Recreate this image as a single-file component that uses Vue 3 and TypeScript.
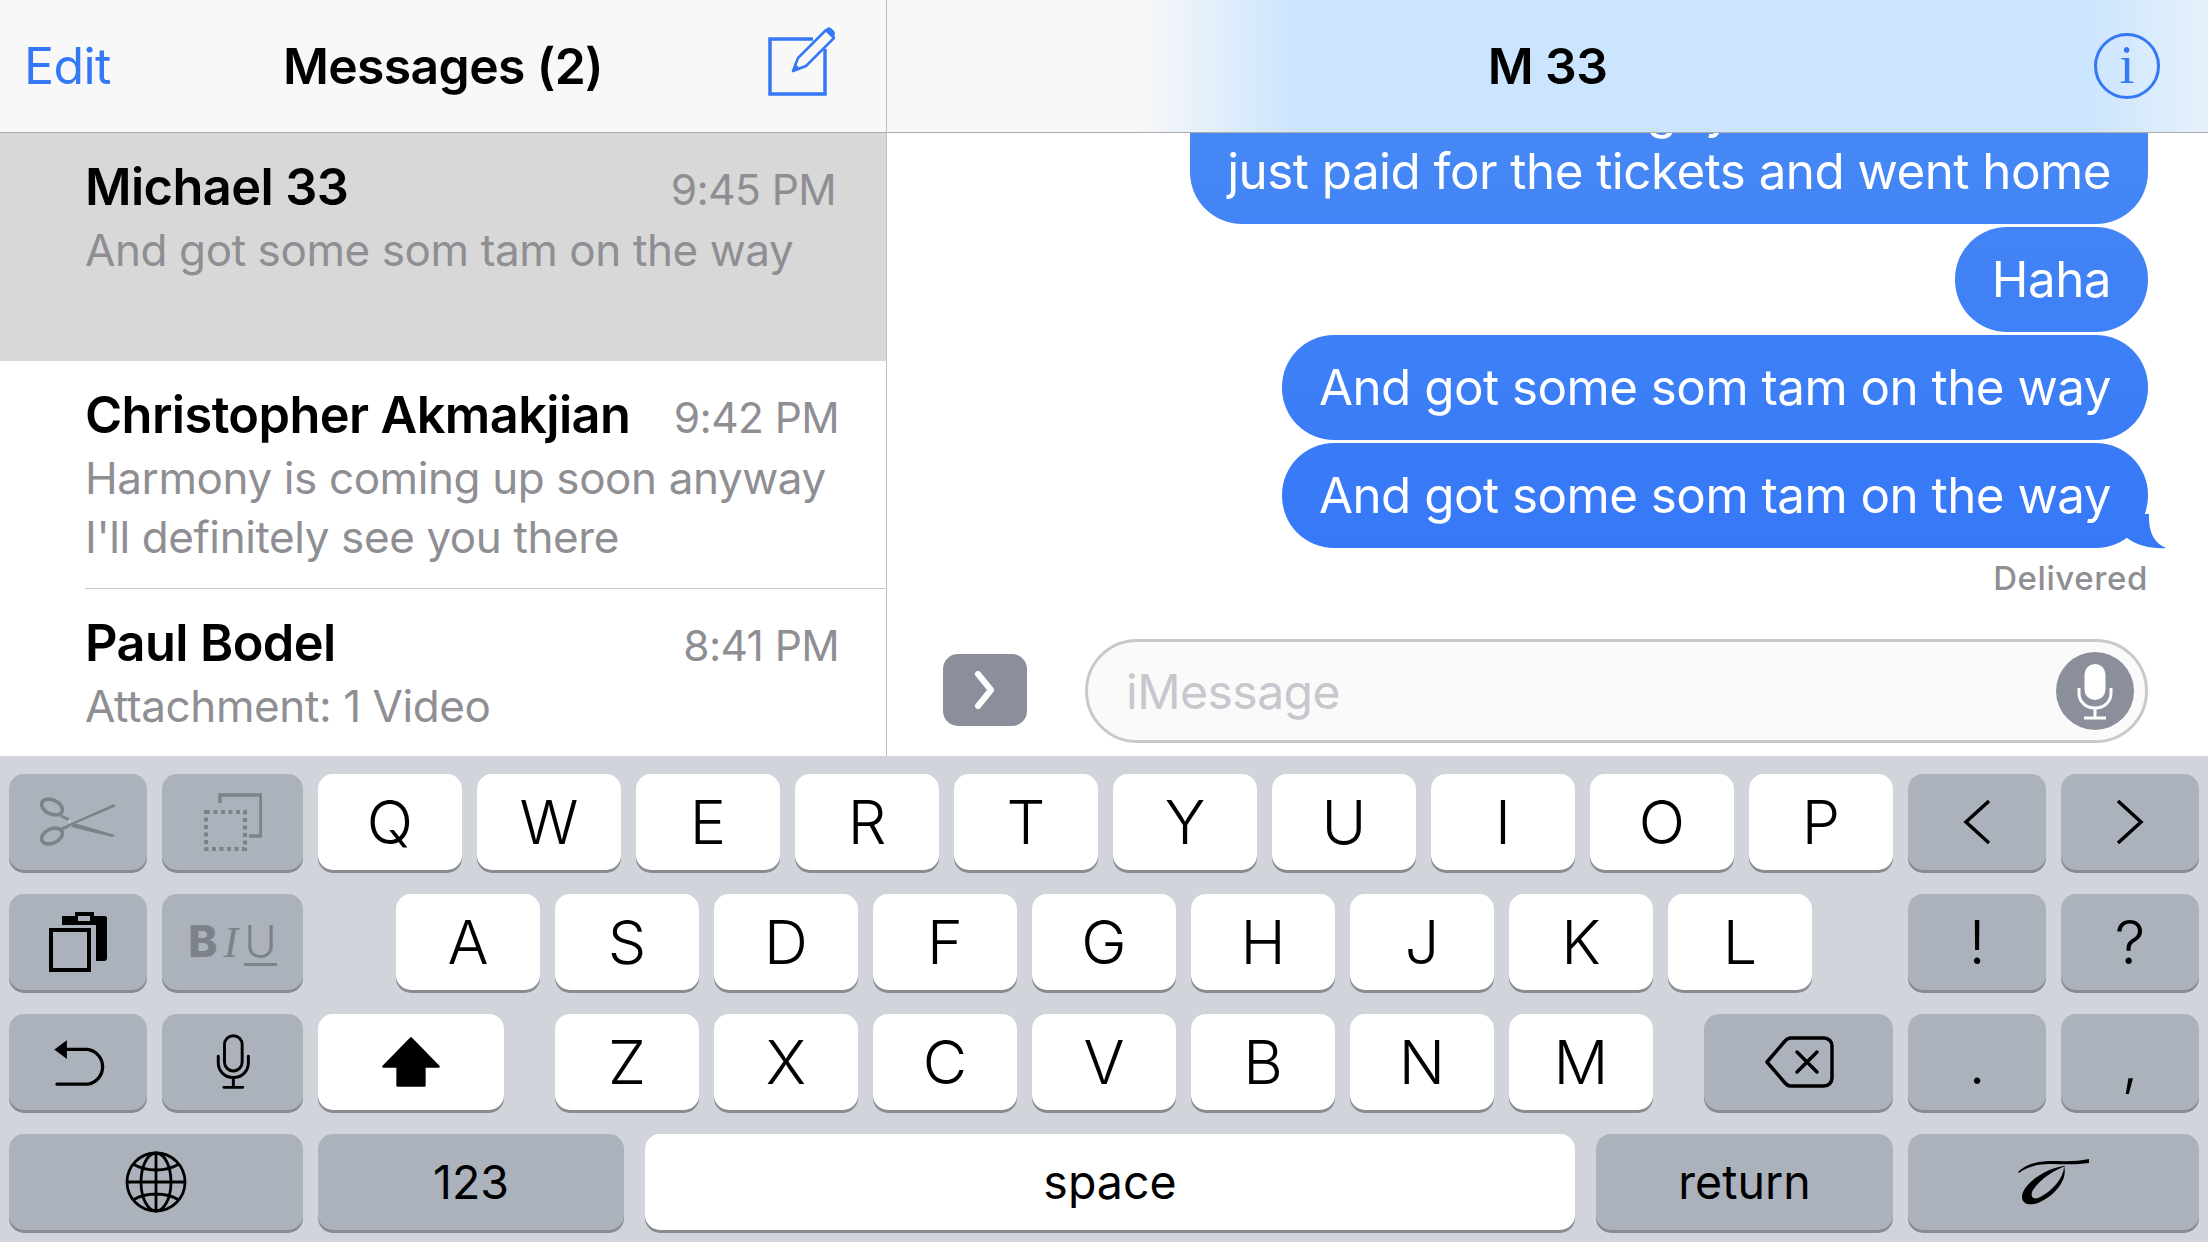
<template>
  <div class="screen">
    <div class="top">
      <!-- conversation list -->
      <aside class="list">
        <header class="nav nav--list">
          <span class="nav__edit">Edit</span>
          <span class="nav__title">Messages (2)</span>
          <svg class="nav__compose" width="72" height="72" viewBox="0 0 72 72" fill="none">
            <path d="M47 14H4v55h55V24" stroke="#3478f6" stroke-width="3.5" />
            <path d="M27 46l5-13 28-28 8 8-28 28z" stroke="#3478f6" stroke-width="2.5" stroke-linejoin="round" fill="#f8f8f8" />
            <path d="M27 46l2.500-7 5 5z" fill="#3478f6" />
            <path d="M60 4l2-1.500c2-1 6 3 7 5.500l-1 5z" fill="#3478f6" />
          </svg>
        </header>
        <div
          v-for="c in conversations"
          :key="c.name"
          class="conv"
          :class="{ 'conv--active': c.active }"
          :style="{ height: c.height + 'px' }"
        >
          <div class="conv__head">
            <span class="conv__name">{{ c.name }}</span>
            <span class="conv__time">{{ c.time }}</span>
          </div>
          <div v-for="line in c.preview" :key="line" class="conv__preview">{{ line }}</div>
        </div>
      </aside>

      <!-- open thread -->
      <section class="chat">
        <header class="nav nav--chat">
          <span class="nav__title">M 33</span>
          <span class="nav__info">i</span>
        </header>
        <div class="thread">
          <div class="bubble">
            <div>So we did see the guy at all and</div>
            <div>just paid for the tickets and went home</div>
          </div>
          <div class="bubble">Haha</div>
          <div class="bubble">And got some som tam on the way</div>
          <div class="bubble bubble--tail">
            And got some som tam on the way
            <svg class="bubble__tail" width="46" height="35" viewBox="0 0 46 35">
              <path d="M0 0H29V4C29 18 34 29 46 34C33 35 16 32 6 23Z" fill="#3879f7" />
            </svg>
          </div>
          <div class="delivered">Delivered</div>
        </div>
        <div class="composer">
          <button class="composer__apps">
            <svg width="24" height="38" viewBox="0 0 24 38" fill="none">
              <path d="M5 3l13 16L5 35" stroke="#fff" stroke-width="6" stroke-linecap="round" stroke-linejoin="round" />
            </svg>
          </button>
          <div class="composer__field">
            <span class="composer__hint">iMessage</span>
            <span class="composer__mic">
              <svg width="36" height="56" viewBox="0 0 36 56" fill="none">
                <rect x="7.500" y="0" width="21" height="36" rx="10.500" fill="#fff" />
                <path d="M2 24v5c0 9 7 15 16 15s16-6 16-15v-5M18 44v9M7 54h22" stroke="#fff" stroke-width="3" />
              </svg>
            </span>
          </div>
        </div>
      </section>
    </div>

    <!-- keyboard -->
    <div class="keyboard">
      <div v-for="(row, r) in rows" :key="r" class="kb-row">
        <div
          v-for="k in row"
          :key="k.id"
          class="key"
          :class="[k.dark ? 'key--dark' : 'key--light', k.small ? 'key--small' : '']"
          :style="{ width: k.w + 'px', marginLeft: (k.skip ?? 0) + 'px' }"
        >
          <template v-if="k.text">{{ k.text }}</template>

          <svg v-else-if="k.id === 'cut'" width="76" height="50" viewBox="0 0 76 50" fill="none">
            <ellipse cx="12" cy="10" rx="11" ry="7" transform="rotate(25 12 10)" stroke="#7d8289" stroke-width="3.500" />
            <ellipse cx="12" cy="39" rx="11" ry="7" transform="rotate(-25 12 39)" stroke="#7d8289" stroke-width="3.500" />
            <path d="M20 31L74 7l1.500 2.500L33 27.500l-7 4.500-4 1zM34 26l41 12-3 2-41-10zM21 17l9 5-2 2-8-4z" fill="#7d8289" />
            <circle cx="29.500" cy="24" r="1.500" fill="#c9ccd2" />
          </svg>

          <svg v-else-if="k.id === 'copy'" width="58" height="58" viewBox="0 0 58 58" fill="none">
            <path d="M16 10V2h41v41H45" stroke="#7d8289" stroke-width="3.500" />
            <rect x="2" y="19" width="39" height="37" stroke="#7d8289" stroke-width="4" stroke-dasharray="4 3.500" />
          </svg>

          <svg v-else-if="k.id === 'paste'" width="58" height="62" viewBox="0 0 58 62" fill="none">
            <path d="M13 5h43a2 2 0 0 1 2 2v40a3 3 0 0 1-3 3h-8V14H13z" fill="#000" />
            <path d="M13 11V8a4 4 0 0 1 4-3h9V1h19v4" fill="#000" />
            <rect x="29" y="5" width="12" height="5" fill="#abb2bc" />
            <rect x="2" y="19" width="38" height="40" stroke="#000" stroke-width="4" />
          </svg>

          <span v-else-if="k.id === 'biu'" class="biu">
            <b class="biu__b">B</b><i class="biu__i">I</i><u class="biu__u">U</u>
          </span>

          <svg v-else-if="k.id === 'undo'" width="58" height="50" viewBox="144 855 175 150" fill="none">
            <path d="M160 892l38-28v57z" fill="#000" />
            <path d="M195 892h65a53 53 0 0 1 0 105h-92" stroke="#000" stroke-width="10" stroke-linecap="round" />
          </svg>

          <svg v-else-if="k.id === 'dictate'" width="36" height="58" viewBox="640 850 110 175" fill="none">
            <rect x="669" y="857" width="54" height="108" rx="27" stroke="#000" stroke-width="9" />
            <path d="M650 920v20c0 26 20 45 46 45s46-19 46-45v-20M696 985v30M667 1015h58" stroke="#000" stroke-width="9" stroke-linecap="round" />
          </svg>

          <svg v-else-if="k.id === 'shift'" width="58" height="50" viewBox="0 0 176 152" fill="none">
            <path d="M88 4L4 90h43v58h82V90h43z" fill="#000" stroke="#000" stroke-width="7" stroke-linejoin="round" />
          </svg>

          <svg v-else-if="k.id === 'back'" width="70" height="52" viewBox="0 0 70 52" fill="none">
            <path d="M3 26L21 5a9 9 0 0 1 5-3h34a8 8 0 0 1 8 8v32a8 8 0 0 1-8 8H26a9 9 0 0 1-5-3z" stroke="#000" stroke-width="3.500" stroke-linejoin="round" />
            <path d="M33 16l20 20M53 16L33 36" stroke="#000" stroke-width="3.500" stroke-linecap="round" />
          </svg>

          <svg v-else-if="k.id === 'left'" width="30" height="46" viewBox="0 0 30 46" fill="none">
            <path d="M27 2L4 23l23 21" stroke="#000" stroke-width="3.500" />
          </svg>

          <svg v-else-if="k.id === 'right'" width="30" height="46" viewBox="0 0 30 46" fill="none">
            <path d="M3 2l23 21L3 44" stroke="#000" stroke-width="3.500" />
          </svg>

          <svg v-else-if="k.id === 'globe'" width="62" height="62" viewBox="0 0 62 62" fill="none" stroke="#000" stroke-width="2.800">
            <circle cx="31" cy="31" r="29" />
            <ellipse cx="31" cy="31" rx="15" ry="29" />
            <path d="M31 2v58M2 31h58M8 13c13 8 33 8 46 0M8 49c13-8 33-8 46 0" />
          </svg>

          <svg v-else-if="k.id === 'scribble'" width="72" height="46" viewBox="0 0 72 46">
            <path d="M0 13C8 5 20 2 32 2C45 2 58 3 71 0L71 4C58 6 44 5 32 5C20 5 8 8 1 14z" fill="#000" />
            <path d="M48 7C32 7 4 24 4 38C4 47 16 47 24 42C38 35 50 20 46 7C46 20 32 34 20 39C14 41 12 36 15 31C22 20 38 10 48 7z" fill="#000" />
          </svg>
        </div>
      </div>
    </div>
  </div>
</template>

<script setup lang="ts">
interface Conversation {
  name: string;
  time: string;
  preview: string[];
  height: number;
  active?: boolean;
}

interface Key {
  id: string;
  w: number;
  text?: string;
  dark?: boolean;
  small?: boolean;
  skip?: number; // extra space before the key
}

const conversations: Conversation[] = [
  { name: 'Michael 33', time: '9:45 PM', preview: ['And got some som tam on the way'], height: 228, active: true },
  {
    name: 'Christopher Akmakjian',
    time: '9:42 PM',
    preview: ['Harmony is coming up soon anyway', "I'll definitely see you there"],
    height: 228,
  },
  { name: 'Paul Bodel', time: '8:41 PM', preview: ['Attachment: 1 Video'], height: 167 },
];

const letters = (s: string): Key[] => s.split('').map((c) => ({ id: c, text: c, w: 144 }));

const rows: Key[][] = [
  [
    { id: 'cut', w: 138, dark: true },
    { id: 'copy', w: 141, dark: true },
    ...letters('QWERTYUIOP'),
    { id: 'left', w: 138, dark: true },
    { id: 'right', w: 138, dark: true },
  ],
  [
    { id: 'paste', w: 138, dark: true },
    { id: 'biu', w: 141, dark: true },
    ...letters('ASDFGHJKL').map((k, i) => (i === 0 ? { ...k, skip: 78 } : k)),
    { id: '!', text: '!', w: 138, dark: true, skip: 81 },
    { id: '?', text: '?', w: 138, dark: true },
  ],
  [
    { id: 'undo', w: 138, dark: true },
    { id: 'dictate', w: 141, dark: true },
    { id: 'shift', w: 186 },
    ...letters('ZXCVBNM').map((k, i) => (i === 0 ? { ...k, skip: 36 } : k)),
    { id: 'back', w: 189, dark: true, skip: 36 },
    { id: '.', text: '.', w: 138, dark: true },
    { id: ',', text: ',', w: 138, dark: true },
  ],
  [
    { id: 'globe', w: 294, dark: true },
    { id: '123', text: '123', w: 306, dark: true, small: true },
    { id: 'space', text: 'space', w: 930, small: true, skip: 6 },
    { id: 'return', text: 'return', w: 297, dark: true, small: true, skip: 6 },
    { id: 'scribble', w: 291, dark: true },
  ],
];
</script>

<style>
html,
body {
  margin: 0;
  background: #fff;
}
</style>

<style scoped>
.screen {
  width: 2208px;
  height: 1242px;
  display: flex;
  flex-direction: column;
  overflow: hidden;
  font-family: Inter, "Liberation Sans", sans-serif;
  color: #000;
}

.top {
  height: 756px;
  display: flex;
}

/* ── Nav bars ── */
.nav {
  height: 132px;
  flex-shrink: 0;
  border-bottom: 1px solid #acacac;
  box-sizing: content-box;
  background: #f8f8f8;
  position: relative;
  z-index: 2;
}
.nav__title {
  font-size: 49.8px;
  font-weight: 600;
  letter-spacing: -0.6px;
}
.nav--list {
  display: grid;
  grid-template-columns: 1fr auto 1fr;
  align-items: center;
  padding: 0 24px;
}
.nav__edit {
  font-size: 50px;
  color: #3478f6;
  letter-spacing: -0.6px;
}
.nav__compose {
  justify-self: end;
  margin: -10px 24px 0 0;
}
.nav--chat {
  display: flex;
  align-items: center;
  justify-content: center;
  background: linear-gradient(90deg, #f8f8f8 0, #f8f8f8 250px, #cce5fe 410px, #cce5fe 1200px, #e6f1fc 1321px);
}
.nav__info {
  position: absolute;
  right: 48px;
  top: 33px;
  width: 66px;
  height: 66px;
  box-sizing: border-box;
  border: 3px solid #3478f6;
  border-radius: 50%;
  color: #3478f6;
  font: 54px/58px "Liberation Serif", serif;
  text-align: center;
}

/* ── Conversation list ── */
.list {
  width: 886px;
  flex-shrink: 0;
  border-right: 1px solid #bdbdc0;
  display: flex;
  flex-direction: column;
  overflow: hidden;
}
.conv {
  flex-shrink: 0;
  box-sizing: border-box;
  padding: 24px 47px 0 85px;
  position: relative;
}
.conv + .conv + .conv::before {
  content: "";
  position: absolute;
  left: 85px;
  right: 0;
  top: -1px;
  height: 1px;
  background: #c8c7cc;
}
.conv--active {
  background: #d8d8d8;
  padding-right: 50px;
}
.conv__head {
  display: flex;
  justify-content: space-between;
  align-items: baseline;
  line-height: 60px;
  margin-bottom: 1px;
}
.conv__name {
  font-size: 50.5px;
  font-weight: 600;
  letter-spacing: -0.6px;
}
.conv__time {
  font-size: 42.5px;
  color: #8e8e93;
  letter-spacing: -0.6px;
}
.conv__preview {
  font-size: 44px;
  line-height: 59px;
  color: #8e8e93;
  letter-spacing: -0.4px;
  white-space: nowrap;
}

/* ── Thread ── */
.chat {
  flex: 1;
  min-width: 0;
  display: flex;
  flex-direction: column;
}
.thread {
  flex: 1;
  min-height: 0;
  overflow: hidden;
  display: flex;
  flex-direction: column;
  justify-content: flex-end;
  align-items: flex-end;
  gap: 3px;
  padding-right: 60px;
  padding-bottom: 42px;
}
.bubble {
  flex-shrink: 0;
  position: relative;
  padding: 22px 37px;
  border-radius: 52px;
  font-size: 49.3px;
  line-height: 61px;
  letter-spacing: -0.5px;
  white-space: nowrap;
  color: #fff;
  background: linear-gradient(180deg, #4688f5 132px, #3678f7 550px) fixed;
}
.bubble__tail {
  position: absolute;
  right: -18px;
  bottom: -1px;
}
.delivered {
  margin-top: 8px;
  font-size: 33px;
  line-height: 38px;
  font-weight: 500;
  letter-spacing: 0.6px;
  color: #8e8e93;
}

/* ── Composer ── */
.composer {
  height: 117px;
  flex-shrink: 0;
  box-sizing: border-box;
  display: flex;
  align-items: flex-start;
  padding: 0 60px 0 56px;
  gap: 58px;
}
.composer__apps {
  width: 84px;
  height: 72px;
  margin-top: 15px;
  padding: 0;
  border: 0;
  border-radius: 15px;
  background: #8a8f9b;
  display: flex;
  align-items: center;
  justify-content: center;
}
.composer__field {
  flex: 1;
  height: 104px;
  box-sizing: border-box;
  border: 3px solid #c8c8cd;
  border-radius: 52px;
  background: #fafafa;
  display: flex;
  align-items: center;
  justify-content: space-between;
  padding: 0 11px 0 38px;
}
.composer__hint {
  font-size: 48px;
  color: #c7c7cd;
  letter-spacing: -0.5px;
}
.composer__mic {
  width: 78px;
  height: 78px;
  border-radius: 50%;
  background: #8a8f9b;
  display: flex;
  align-items: flex-start;
  justify-content: center;
  padding-top: 12px;
  box-sizing: border-box;
}

/* ── Keyboard ── */
.keyboard {
  flex: 1;
  background: #d1d5db;
  padding: 18px 0 0 9px;
  display: flex;
  flex-direction: column;
  gap: 24px;
}
.kb-row {
  display: flex;
  gap: 15px;
}
.key {
  height: 96px;
  flex-shrink: 0;
  border-radius: 15px;
  box-shadow: 0 3px 0 #888b90;
  display: flex;
  align-items: center;
  justify-content: center;
  font-size: 61px;
  font-weight: 300;
}
.key--light {
  background: #fff;
}
.key--dark {
  background: #abb2bc;
}
.key--small {
  font-size: 46.5px;
  font-weight: 400;
}
.biu {
  display: flex;
  align-items: baseline;
  gap: 6px;
  color: #7d8289;
  font-size: 44px;
  line-height: 1;
}
.biu__b {
  font-weight: 800;
}
.biu__i {
  font-family: "Liberation Serif", serif;
}
.biu__u {
  font-weight: 300;
  text-decoration: none;
  border-bottom: 3px solid #7d8289;
}
</style>
